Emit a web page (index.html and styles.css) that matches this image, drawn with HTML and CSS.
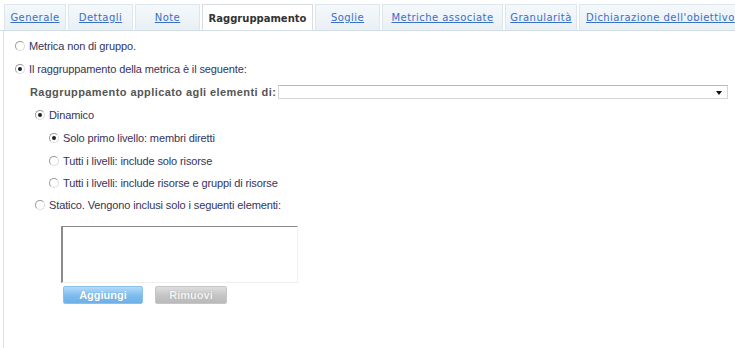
FILE: index.html
```html
<!DOCTYPE html>
<html lang="it">
<head>
<meta charset="utf-8">
<title>Raggruppamento</title>
<link rel="stylesheet" href="styles.css">
</head>
<body>
<div class="tabs">
  <a class="tab w-gen" href="#">Generale</a>
  <a class="tab w-det" href="#">Dettagli</a>
  <a class="tab w-note" href="#">Note</a>
  <span class="tab active w-rag">Raggruppamento</span>
  <a class="tab w-sog" href="#">Soglie</a>
  <a class="tab w-met" href="#">Metriche associate</a>
  <a class="tab w-gra" href="#">Granularità</a>
  <a class="tab w-dic" href="#">Dichiarazione dell'obiettivo</a>
</div>
<div class="panel">
  <label class="row lv0"><span class="radio"></span>Metrica non di gruppo.</label>
  <label class="row lv0"><span class="radio on"></span>Il raggruppamento della metrica è il seguente:</label>
  <div class="row lbl-row">
    <span class="bold-lbl">Raggruppamento applicato agli elementi di:</span>
    <div class="select"><span class="arrow"></span></div>
  </div>
  <label class="row lv1"><span class="radio on"></span>Dinamico</label>
  <label class="row lv2"><span class="radio on"></span>Solo primo livello: membri diretti</label>
  <label class="row lv2"><span class="radio"></span>Tutti i livelli: include solo risorse</label>
  <label class="row lv2 short"><span class="radio"></span>Tutti i livelli: include risorse e gruppi di risorse</label>
  <label class="row lv1 short"><span class="radio"></span>Statico. Vengono inclusi solo i seguenti elementi:</label>
  <div class="listbox"></div>
  <div class="buttons">
    <span class="btn btn-add">Aggiungi</span>
    <span class="btn btn-rem">Rimuovi</span>
  </div>
</div>
</body>
</html>
```
FILE: styles.css
```css
* { box-sizing: border-box; }
html, body { margin: 0; padding: 0; background: #fff; }
body {
  width: 735px;
  height: 348px;
  overflow: hidden;
  font-family: "Liberation Sans", Arial, sans-serif;
  font-size: 11px;
  letter-spacing: -0.12px;
  color: #34345a;
}
.tabs {
  display: flex;
  flex-wrap: nowrap;
  overflow: hidden;
  padding: 4px 0 0 4px;
  border-bottom: 1px solid #d3dee6;
  height: 31px;
}
.tab {
  flex: none;
  height: 26px;
  margin-right: 2px;
  display: flex;
  align-items: center;
  justify-content: center;
  white-space: nowrap;
  font-family: "DejaVu Sans", Verdana, sans-serif;
  font-size: 10px;
  letter-spacing: 0.45px;
  color: #3a6fc6;
  text-decoration: underline;
  background: linear-gradient(#f4f8fb, #e9f0f5);
  border: 1px solid #dde6ed;
  border-bottom: none;
}
.tab.active {
  height: 27px;
  margin-bottom: -1px;
  background: #fff;
  border-color: #d8dde2;
  color: #333;
  font-weight: bold;
  letter-spacing: 0;
  text-decoration: none;
  position: relative;
}
.w-gen { width: 62px; }
.w-det { width: 65px; }
.w-note { width: 65px; }
.w-rag { width: 111px; }
.w-sog { width: 65px; }
.w-met { width: 121px; }
.w-gra { width: 72px; }
.w-dic { width: 200px; justify-content: flex-start; padding-left: 6px; }
.panel {
  margin-left: 3px;
  border-left: 1px solid #e2e2e2;
  height: 317px;
  padding-top: 3px;
}
.row {
  display: flex;
  align-items: center;
  height: 23px;
  white-space: nowrap;
}
.row.short { height: 22px; }
.lv0 { padding-left: 11px; }
.lv1 { padding-left: 31px; }
.lv2 { padding-left: 45px; }
.radio {
  flex: none;
  width: 10px;
  height: 10px;
  margin-right: 4px;
  border-radius: 50%;
  border: 1px solid #9a9a9a;
  border-right-color: #dcdcdc;
  border-bottom-color: #dcdcdc;
  background: #fff;
  display: flex;
  align-items: center;
  justify-content: center;
}
.radio.on::after {
  content: "";
  width: 4px;
  height: 4px;
  border-radius: 50%;
  background: #222;
}
.lbl-row { padding-left: 26px; }
.bold-lbl {
  font-weight: bold;
  color: #555;
  letter-spacing: 0.42px;
  margin-right: 2px;
}
.select {
  flex: 1;
  margin-right: 7px;
  height: 14px;
  border: 1px solid #d6d6d6;
  border-top-color: #b9b9b9;
  background: #fff;
  display: flex;
  align-items: center;
  justify-content: flex-end;
  padding-right: 5px;
}
.arrow {
  width: 0;
  height: 0;
  border-left: 3.5px solid transparent;
  border-right: 3.5px solid transparent;
  border-top: 4px solid #111;
  position: relative;
  top: 1px;
}
.listbox {
  margin: 10px 0 0 57px;
  width: 237px;
  height: 57px;
  border: 1px solid #f0f0f0;
  border-top-color: #8a8a8a;
  border-left: 2px solid #8a8a8a;
  background: #fff;
}
.buttons {
  display: flex;
  gap: 12px;
  margin: 3px 0 0 59px;
}
.btn {
  height: 18px;
  display: flex;
  align-items: center;
  justify-content: center;
  font-weight: bold;
  font-size: 11px;
  letter-spacing: 0;
  color: #fff;
  border-radius: 2px;
}
.btn-add {
  width: 80px;
  background: linear-gradient(#b4dbfa, #7dbbee 55%, #6db0e8);
  border: 1px solid #8cc0e6;
  text-shadow: 0 0 1px #6a9fce;
}
.btn-rem {
  width: 72px;
  background: linear-gradient(#dedede, #c4c4c4 55%, #bababa);
  border: 1px solid #c6c6c6;
  color: #f4f4f4;
  text-shadow: 0 0 1px #999;
}
```
